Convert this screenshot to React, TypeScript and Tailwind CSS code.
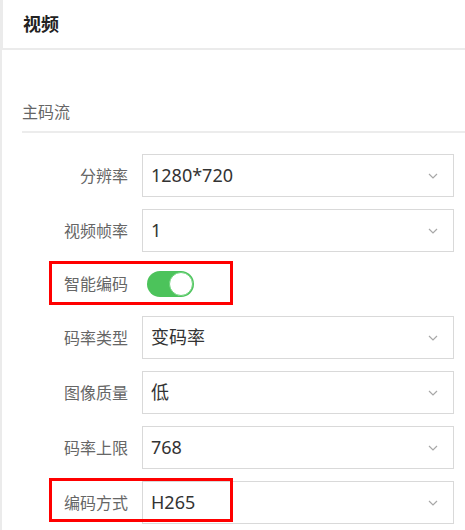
import React from "react";

const font = { fontFamily: '"Noto Sans", "Noto Sans CJK SC", sans-serif' };

function Chevron() {
  return (
    <svg width="10" height="6" viewBox="0 0 10 6" className="mr-[15px]">
      <path d="M1 1 L5 5 L9 1" fill="none" stroke="#a8a8a8" strokeWidth="1.2" />
    </svg>
  );
}

function SelectRow({ label, value }: { label: string; value: string }) {
  return (
    <div className="flex items-center h-[43px]">
      <div className="w-[126px] text-right text-[16px] text-[#666]">{label}</div>
      <div className="ml-[14px] w-[312px] h-[43px] border border-[#d9d9d9] flex items-center justify-between pl-[8px] text-[18px] text-[#333]">
        <span>{value}</span>
        <Chevron />
      </div>
    </div>
  );
}

export default function App() {
  return (
    <div className="relative w-[465px] h-[530px] bg-white overflow-hidden" style={font}>
      <div className="h-[48px] border-l-[3px] border-[#ebebeb] flex items-center pl-[20px] text-[18px] font-bold text-[#222]">
        视频
      </div>
      <div className="h-[2px] bg-[#ebebeb]" />
      <div className="border-l-[2px] border-[#ebebeb] h-[480px]">
        <div className="pl-[20px] pt-[52px]">
          <div className="text-[16px] text-[#666] leading-[20px] pb-[9px] border-b-2 border-[#ececec]">主码流</div>
        </div>
        <div className="pt-[21px] flex flex-col gap-[12px]">
          <SelectRow label="分辨率" value="1280*720" />
          <SelectRow label="视频帧率" value="1" />
          <div className="flex items-center h-[40px]">
            <div className="w-[126px] text-right text-[16px] text-[#666]">智能编码</div>
            <div className="ml-[19px] w-[47px] h-[26px] rounded-full bg-[#4cc35b] flex items-center justify-end pr-[1px]">
              <div className="w-[24px] h-[24px] rounded-full bg-white border border-[#6bd279]" />
            </div>
          </div>
          <SelectRow label="码率类型" value="变码率" />
          <SelectRow label="图像质量" value="低" />
          <SelectRow label="码率上限" value="768" />
          <SelectRow label="编码方式" value="H265" />
        </div>
      </div>
      <div className="absolute left-[49px] top-[261px] w-[184px] h-[44px] border-[3px] border-[#ff0000]" />
      <div className="absolute left-[49px] top-[478px] w-[184px] h-[44px] border-[3px] border-[#ff0000]" />
    </div>
  );
}
